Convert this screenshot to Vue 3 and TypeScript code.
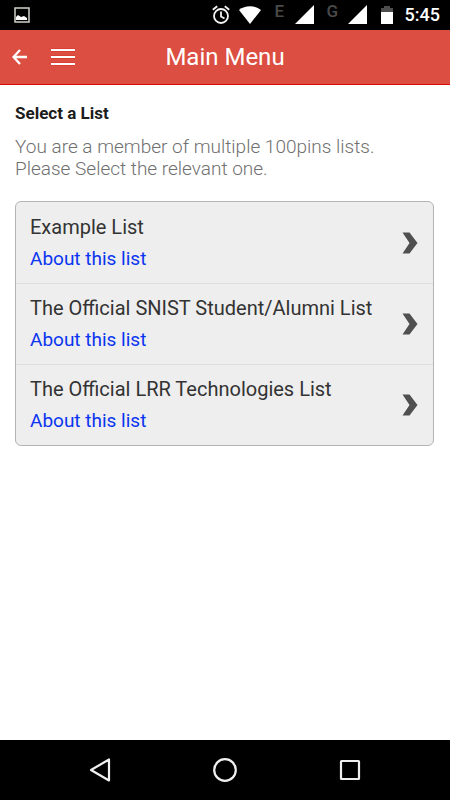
<script setup lang="ts">
interface MemberList {
  id: string
  name: string
}

const lists: MemberList[] = [
  { id: 'example', name: 'Example List' },
  { id: 'snist', name: 'The Official SNIST Student/Alumni List' },
  { id: 'lrr', name: 'The Official LRR Technologies List' },
]
</script>

<template>
  <div class="screen">
    <div class="status">
      <svg class="picture" width="16" height="16" viewBox="0 0 16 16">
        <path d="M1 1H15V15H1Z" fill="none" stroke="#d2d2cc" stroke-width="1.5" />
        <path d="M2 13V10L4 8L7 10L10 9L13 11V13Z" fill="#fff" />
      </svg>
      <svg class="alarm" width="18" height="20" viewBox="0 0 18 20">
        <g fill="none" stroke="#f4f4f4" stroke-width="1.8">
          <circle cx="9" cy="11" r="7" />
          <path d="M9 6.500V11.500L12.500 13.500" />
          <path d="M0.800 4.800L5.200 1.200M17.200 4.800L12.800 1.200" />
        </g>
      </svg>
      <svg class="wifi" width="24" height="18" viewBox="0 0 24 18">
        <path d="M1 4C7-1 17-1 23 4L12 18Z" fill="#fff" />
      </svg>
      <span class="network">E</span>
      <svg class="signal" width="20" height="20" viewBox="0 0 20 20">
        <path d="M19 0V19H0Z" fill="#fff" />
      </svg>
      <span class="network network-g">G</span>
      <svg class="signal" width="20" height="20" viewBox="0 0 20 20">
        <path d="M19 0V19H0Z" fill="#fff" />
      </svg>
      <svg class="battery" width="12" height="18" viewBox="0 0 12 18">
        <path d="M0 2H3V0H9V2H12V6H0Z" fill="#4d4d4d" />
        <path d="M0 6H12V18H0Z" fill="#fff" />
      </svg>
      <time class="clock">5:45</time>
    </div>

    <header class="bar">
      <div class="bar-actions">
        <button class="bar-button" type="button" aria-label="Back">
          <svg width="16" height="16" viewBox="0 0 16 16">
            <path d="M15 8H1.500M8 1L1.500 8L8 15" fill="none" stroke="#fff" stroke-width="2.300" />
          </svg>
        </button>
        <button class="bar-button" type="button" aria-label="Menu">
          <svg width="26" height="18" viewBox="0 0 26 18">
            <path d="M1 2H25M1 9H25M1 16H25" fill="none" stroke="#d51a10" stroke-width="3" stroke-opacity="0.500" />
            <path d="M1 2H25M1 9H25M1 16H25" fill="none" stroke="#fff" stroke-width="2" />
          </svg>
        </button>
      </div>
      <h1 class="title">Main Menu</h1>
    </header>

    <main class="content">
      <h2 class="heading">Select a List</h2>
      <p class="intro">You are a member of multiple 100pins lists.<br />Please Select the relevant one.</p>
      <ul class="lists">
        <li v-for="list in lists" :key="list.id" class="row">
          <div class="row-text">
            <span class="row-name">{{ list.name }}</span>
            <a class="row-link" :href="'#' + list.id">About this list</a>
          </div>
          <button class="open" type="button" :aria-label="'Open ' + list.name">
            <svg width="16" height="22" viewBox="0 0 16 22">
              <path d="M0.500 0.500H7.500L15.500 11L7.500 21.500H0.500L7.500 11Z" fill="#505050" />
            </svg>
          </button>
        </li>
      </ul>
    </main>

    <nav class="system">
      <button class="system-button" type="button" aria-label="System back">
        <svg width="26" height="26" viewBox="0 0 26 26">
          <path d="M22 2.500V23.500L4 13Z" fill="none" stroke="#f0f0f0" stroke-width="2.200" stroke-linejoin="round" />
        </svg>
      </button>
      <button class="system-button" type="button" aria-label="Home">
        <svg width="26" height="26" viewBox="0 0 26 26">
          <circle cx="13" cy="13" r="10.800" fill="none" stroke="#f0f0f0" stroke-width="2.200" />
        </svg>
      </button>
      <button class="system-button" type="button" aria-label="Recent apps">
        <svg width="26" height="26" viewBox="0 0 26 26">
          <rect x="4" y="4" width="18" height="18" rx="0.500" fill="none" stroke="#f0f0f0" stroke-width="2.200" />
        </svg>
      </button>
    </nav>
  </div>
</template>

<style>
body {
  margin: 0;
  background: #fff;
}
</style>

<style scoped>
.screen {
  display: flex;
  flex-direction: column;
  min-height: 100vh;
  font-family: Roboto, "Liberation Sans", sans-serif;
}

svg {
  display: block;
  flex: none;
}

button {
  display: flex;
  align-items: center;
  justify-content: center;
  padding: 0;
  border: 0;
  background: none;
  cursor: pointer;
}

.status {
  display: flex;
  align-items: center;
  height: 30px;
  padding: 0 10px 0 14px;
  background: #000;
  color: #fff;
}

.picture {
  margin-right: auto;
}

.wifi {
  margin: 0 13px 0 8px;
}

.network {
  align-self: flex-start;
  width: 20px;
  font-size: 17px;
  font-weight: 500;
  line-height: 22px;
  color: #4a4a4a;
}

.network-g {
  width: 21px;
  margin-left: 12px;
}

.battery {
  margin: 0 12px 0 13px;
}

.clock {
  font-size: 18px;
  font-weight: 500;
  line-height: 30px;
}

.bar {
  display: grid;
  grid-template-columns: 1fr auto 1fr;
  align-items: center;
  height: 55px;
  box-sizing: border-box;
  padding: 0 12px;
  border-bottom: 1px solid #d60a08;
  background: #dc4e41;
  color: #fff;
}

.bar-actions {
  display: flex;
  align-items: center;
  gap: 22px;
}

.title {
  margin: 0;
  font-size: 24px;
  font-weight: 400;
  line-height: 54px;
}

.content {
  flex: 1;
  padding: 16px 16px 16px 15px;
}

.heading {
  margin: 0;
  font-size: 17px;
  font-weight: 700;
  line-height: 24px;
  color: #1c1c1c;
}

.intro {
  margin: 11px 0 21px;
  font-size: 19px;
  font-weight: 300;
  line-height: 22px;
  color: #707070;
}

.lists {
  margin: 0;
  padding: 0;
  overflow: hidden;
  border: 1px solid #b4b4b4;
  border-radius: 6px;
  background: #eee;
  list-style: none;
}

.row {
  display: flex;
  align-items: center;
  justify-content: space-between;
  height: 81px;
  box-sizing: border-box;
  padding: 0 15px 0 14px;
  border-bottom: 1px solid #ddd;
}

.row:first-child {
  height: 82px;
}

.row:last-child {
  height: 80px;
  border-bottom: 0;
}

.row-text {
  display: flex;
  flex-direction: column;
  align-items: flex-start;
}

.row-name {
  font-size: 20px;
  line-height: 32px;
  color: #333;
}

.row-link {
  font-size: 19px;
  line-height: 32px;
  color: #0a35f0;
  text-decoration: none;
}

.system {
  display: flex;
  align-items: center;
  justify-content: center;
  gap: 99px;
  height: 60px;
  background: #000;
}
</style>
